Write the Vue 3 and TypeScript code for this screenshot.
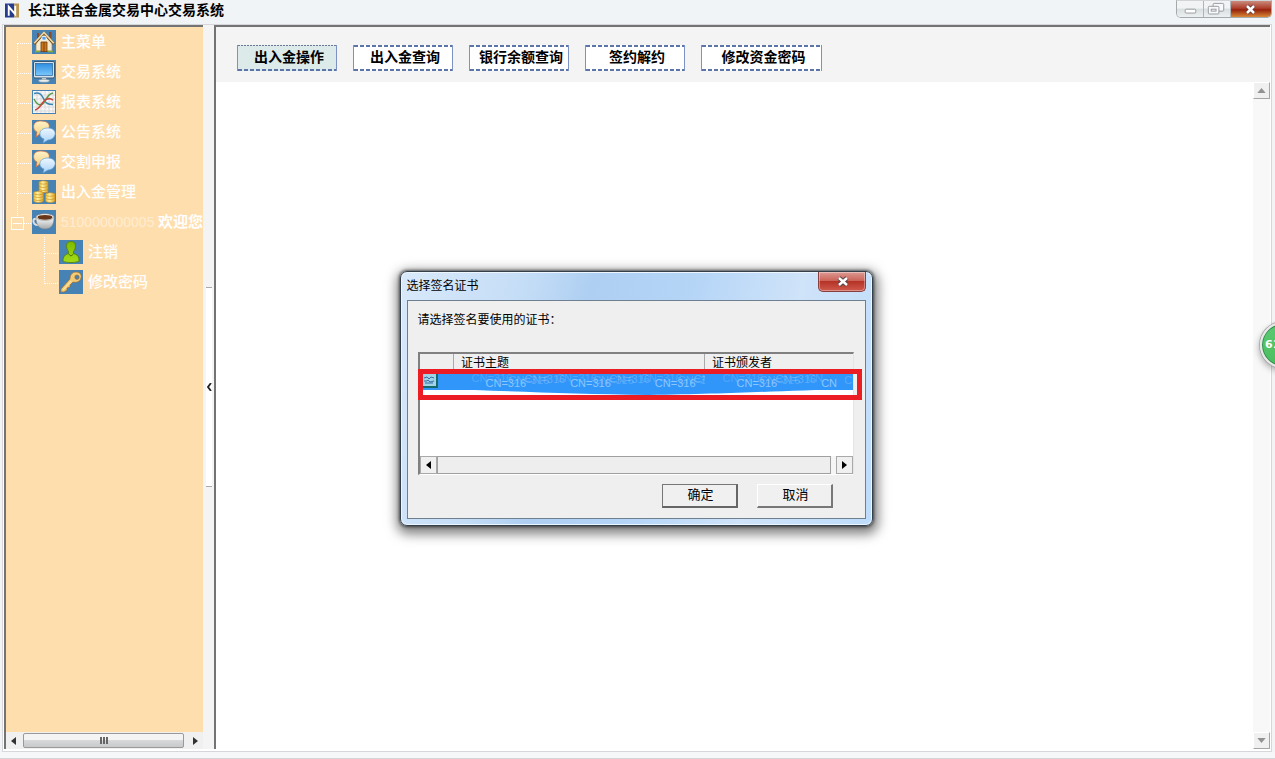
<script setup lang="ts">
import { ref } from 'vue'

interface TreeItem {
  label: string
  icon: string
}

const menu: TreeItem[] = [
  { label: '主菜单', icon: 'home' },
  { label: '交易系统', icon: 'monitor' },
  { label: '报表系统', icon: 'chart' },
  { label: '公告系统', icon: 'chat' },
  { label: '交割申报', icon: 'chat' },
  { label: '出入金管理', icon: 'coins' },
]
const children: TreeItem[] = [
  { label: '注销', icon: 'user' },
  { label: '修改密码', icon: 'key' },
]
const tabs: string[] = ['出入金操作', '出入金查询', '银行余额查询', '签约解约', '修改资金密码']
const activeTab = ref<string>('出入金操作')
</script>

<template>
  <div class="window">
    <svg class="defs" aria-hidden="true">
      <defs>
        <linearGradient id="gScreen" x1="0" y1="0" x2="0" y2="1"><stop offset="0" stop-color="#2f8de0" /><stop offset="1" stop-color="#7cc8fb" /></linearGradient>
        <linearGradient id="gWarm" x1="0" y1="0" x2="0" y2="1"><stop offset="0" stop-color="#fff2c8" /><stop offset="1" stop-color="#f8cf7c" /></linearGradient>
        <linearGradient id="gCool" x1="0" y1="0" x2="0" y2="1"><stop offset="0" stop-color="#eef7ff" /><stop offset="1" stop-color="#a9d2f8" /></linearGradient>
        <linearGradient id="gGold" x1="0" y1="0" x2="1" y2="0"><stop offset="0" stop-color="#e9b62e" /><stop offset=".4" stop-color="#fff0a0" /><stop offset="1" stop-color="#dea323" /></linearGradient>
        <linearGradient id="gCup" x1="0" y1="0" x2="0" y2="1"><stop offset="0" stop-color="#ffffff" /><stop offset="1" stop-color="#a4a8aa" /></linearGradient>
        <linearGradient id="gGreen" x1="0" y1="0" x2="0" y2="1"><stop offset="0" stop-color="#7dbb00" /><stop offset="1" stop-color="#a4dc17" /></linearGradient>
      </defs>
      <symbol id="home" viewBox="0 0 24 24">
        <path d="M5 3h2v6H5zM17 2h2.500v7H17z" fill="#8b4a2a" />
        <path d="M4 12 12 4l8 8v9H4z" fill="#f3ead0" stroke="#9b8458" stroke-width=".7" />
        <path d="M2 14 12 3 22 14" fill="none" stroke="#79501f" stroke-width="2.800" />
        <path d="M2.200 13.300 12 2.500 21.800 13.300" fill="none" stroke="#e9d9a7" stroke-width="1.700" />
        <path d="M9 12h6v9.500H9z" fill="#c9761c" stroke="#713d0b" stroke-width=".8" /><path d="M12 12v9" stroke="#82470d" />
        <path d="M10 6.500h4v3.500h-4z" fill="#4fa1ed" stroke="#fff" stroke-width=".7" />
        <path d="M3 21.500h5M16 21.500h5" stroke="#83ac3b" stroke-width="1.500" />
      </symbol>
      <symbol id="monitor" viewBox="0 0 24 24">
        <rect x="1.500" y="1.500" width="21" height="16.500" rx="1.500" fill="#d6e3eb" stroke="#38566f" />
        <rect x="3.500" y="3.500" width="17" height="12" fill="url(#gScreen)" stroke="#2462a0" stroke-width=".7" />
        <path d="M10 18h4l1 3H9z" fill="#c2cdd2" /><ellipse cx="12" cy="20.800" rx="5.500" ry="1.500" fill="#e9edee" stroke="#778b96" stroke-width=".6" />
      </symbol>
      <symbol id="chart" viewBox="0 0 24 24">
        <path d="M1 1h22v22H1z" fill="#f6f6f6" />
        <path d="M5 1v22M9 1v22M13 1v22M17 1v22M21 1v22M1 5h22M1 9h22M1 13h22M1 17h22M1 21h22" stroke="#ccc" stroke-width=".6" />
        <path d="M2 3.500c6-2 8 2 10 6s4 5 9 5" fill="none" stroke="#3884b2" stroke-width="1.600" />
        <path d="M2 9c4 8 8 7 11 2s4-7 8-8" fill="none" stroke="#5b9c4e" stroke-width="1.600" />
        <path d="M3 20c5-1 6-6 9-9s6-3 9-1" fill="none" stroke="#c8463c" stroke-width="1.600" />
      </symbol>
      <symbol id="chat" viewBox="0 0 24 24">
        <path d="M8 1c8 0 10 3 9 7-1 4-5 5-8 5l-5 4 1-5C0 10 0 1 8 1z" fill="url(#gWarm)" stroke="#d3703d" stroke-width=".7" />
        <path d="M16 8c6 0 8 4 7 7s-4 5-7 5l-5 3 1-4c-6-2-6-11 4-11z" fill="url(#gCool)" stroke="#5f9ed3" stroke-width=".7" />
      </symbol>
      <symbol id="coins" viewBox="0 0 24 24">
        <g fill="url(#gGold)" stroke="#c18a1b" stroke-width=".6">
          <path d="M7 2.500v10h9v-10z" /><ellipse cx="11.500" cy="2.500" rx="4.500" ry="1.700" /><path d="M7 6c2 2 7 2 9 0M7 9c2 2 7 2 9 0" fill="none" />
          <path d="M1.500 13v8c2 2 8 2 10 0v-8z" /><ellipse cx="6.500" cy="13" rx="5" ry="1.800" /><path d="M1.500 16c2 2 8 2 10 0m-10 3c2 2 8 2 10 0" fill="none" />
          <path d="M13.500 14.500v6.500c2 2 8 2 9.500 0v-6.500z" /><ellipse cx="18.300" cy="14.500" rx="4.800" ry="1.800" /><path d="M13.500 18c2 2 8 2 9.500 0" fill="none" />
        </g>
      </symbol>
      <symbol id="cup" viewBox="0 0 24 24">
        <path d="M5 9C0 7 0 15 6 15" fill="none" stroke="#dedede" stroke-width="2" />
        <path d="M4 7c0 8 3 12 9 12s9-4 9-12z" fill="url(#gCup)" stroke="#838383" stroke-width=".5" />
        <ellipse cx="13" cy="7" rx="9" ry="3.300" fill="#f3f3f3" stroke="#858585" stroke-width=".6" /><ellipse cx="13" cy="7.300" rx="7.500" ry="2.400" fill="#683619" />
      </symbol>
      <symbol id="user" viewBox="0 0 24 24">
        <path d="M12 1.500c6 0 5 7 2.500 10v2c4 1 5.500 3 5.500 7.500-3 2-13 2-16 0 0-4.500 2-6.500 5.500-7.500v-2C7 8.500 6 1.500 12 1.500z" fill="url(#gGreen)" stroke="#547f00" stroke-width=".8" />
        <path d="m9.500 14 2.500 2 2.500-2" fill="none" stroke="#4e7500" />
      </symbol>
      <symbol id="key" viewBox="0 0 24 24">
        <path fill-rule="evenodd" d="M17 2c4 0 6 3 5 6-1 4-5 5-8 4l-3 3v2l-3 1v2l-3 2H2v-3L11 9c0-4 2-7 6-7zm1 3a2.200 2.200 0 1 0 0 4.400A2.200 2.200 0 0 0 18 5z" fill="#f3cb77" stroke="#a46f28" stroke-width=".7" />
        <path d="m4 20 8-9" stroke="#fff2bd" />
      </symbol>
    </svg>

    <header class="titlebar">
      <svg class="logo" viewBox="0 0 15 15">
        <path d="M0 0h10v15H0z" fill="#273c8c" /><path d="M10 0h5v15h-5z" fill="#ba9653" />
        <path d="M4 13V3.500l7 8V2.500" fill="none" stroke="#fff" stroke-width="2" />
      </svg>
      <h1>长江联合金属交易中心交易系统</h1>
      <div class="winbtns">
        <button type="button" aria-label="最小化"><svg viewBox="0 0 27 16"><rect x="8.500" y="8.500" width="11" height="4" rx="1" fill="#fff" stroke="#969a9d" /></svg></button>
        <button type="button" aria-label="还原"><svg viewBox="0 0 27 16"><g fill="#f8f9fa" stroke="#969a9d"><rect x="9.500" y="2.500" width="11" height="8" rx="1" /><rect x="4.500" y="5.500" width="11" height="8" rx="1" /><rect x="7.500" y="8.500" width="5" height="2" /></g></svg></button>
        <button type="button" class="close" aria-label="关闭窗口"><svg viewBox="0 0 40 16"><path d="m16 5 7 7m0-7-7 7" stroke="#5d3430" stroke-width="4" /><path d="m16 5 7 7m0-7-7 7" stroke="#fff" stroke-width="2.500" /></svg></button>
      </div>
    </header>

    <div class="body">
      <aside class="sidebar">
        <nav class="tree">
          <ul>
            <li v-for="item in menu" :key="item.label" class="row">
              <span class="branch"></span>
              <a href="#"><svg class="icon"><use :href="'#' + item.icon" /></svg>{{ item.label }}</a>
            </li>
            <li>
              <div class="row last">
                <span class="branch"></span>
                <button type="button" class="toggle" aria-label="折叠"></button>
                <a href="#"><svg class="icon"><use href="#cup" /></svg><span class="masked">510000000005</span><b>欢迎您</b></a>
              </div>
              <ul class="sub">
                <li v-for="item in children" :key="item.label" class="row">
                  <span class="branch"></span>
                  <a href="#"><svg class="icon"><use :href="'#' + item.icon" /></svg>{{ item.label }}</a>
                </li>
              </ul>
            </li>
          </ul>
        </nav>
        <div class="hscroll">
          <button type="button" aria-label="向左"><svg viewBox="0 0 5 8"><path d="M5 0v8L0 4z" fill="#333" /></svg></button>
          <div class="thumb"><i></i><i></i><i></i></div>
          <button type="button" aria-label="向右"><svg viewBox="0 0 5 8"><path d="M0 0v8l5-4z" fill="#333" /></svg></button>
        </div>
      </aside>

      <div class="splitter">
        <button type="button" aria-label="收起侧栏"><svg viewBox="0 0 5 8"><path d="M4 0 1 4l3 4" fill="none" stroke="#222" stroke-width="1.800" /></svg></button>
      </div>

      <main class="content">
        <div class="toolbar">
          <button v-for="tab in tabs" :key="tab" type="button" :class="{ active: tab === activeTab, wide: tab === '修改资金密码' }" @click="activeTab = tab">{{ tab }}</button>
        </div>
        <div class="view">
          <div class="vscroll">
            <button type="button" aria-label="向上"><svg viewBox="0 0 10 6"><path d="M0 6h10L5 0z" fill="#929292" /></svg></button>
            <button type="button" aria-label="向下"><svg viewBox="0 0 10 6"><path d="M0 0h10L5 6z" fill="#929292" /></svg></button>
          </div>
        </div>
      </main>
    </div>
    <footer class="status"></footer>

    <div class="badge">61</div>

    <section class="dialog" role="dialog" aria-labelledby="dlg-title">
      <header>
        <h2 id="dlg-title">选择签名证书</h2>
        <button type="button" aria-label="关闭"><svg viewBox="0 0 46 18"><path d="m20 6 8 7m0-7-8 7" stroke="#584448" stroke-width="4.500" /><path d="m20 6 8 7m0-7-8 7" stroke="#fff" stroke-width="2.500" /></svg></button>
      </header>
      <div class="panel">
        <p>请选择签名要使用的证书：</p>
        <div class="list">
          <table>
            <colgroup><col class="c1" /><col class="c2" /><col /></colgroup>
            <thead><tr><th></th><th>证书主题</th><th>证书颁发者</th></tr></thead>
            <tbody>
              <tr>
                <td><svg class="cert" viewBox="0 0 16 14"><path d="M0 0h16v14H0z" fill="#17686b" /><path d="M0 0h14v12H0z" fill="#9fd5e4" /><path d="M2 4l3-1 2 2 2-2 3 1M2 7h3l1-1 2 2 4-1M3 9h8" fill="none" stroke="#336daa" /></svg></td>
                <td><div class="smear"><span>CN=316</span><span>CN=316</span><span>CN=316</span></div></td>
                <td><div class="smear"><span>CN=316</span><span>CN</span></div></td>
              </tr>
            </tbody>
          </table>
          <svg class="swoosh" viewBox="0 0 414 6" preserveAspectRatio="none"><path d="M0 0h414C330 2 290 5 210 6 130 5 70 2 0 0z" fill="#3096fa" /></svg>
          <div class="mark"></div>
          <div class="listscroll">
            <button type="button" aria-label="列表向左"><svg viewBox="0 0 5 8"><path d="M5 0v8L0 4z" fill="#000" /></svg></button>
            <div class="bar"></div>
            <button type="button" aria-label="列表向右"><svg viewBox="0 0 5 8"><path d="M0 0v8l5-4z" fill="#000" /></svg></button>
          </div>
        </div>
        <div class="actions">
          <button type="button" class="default">确定</button>
          <button type="button">取消</button>
        </div>
      </div>
    </section>
  </div>
</template>

<style>
body {
  margin: 0;
}
</style>

<style scoped>
* {
  box-sizing: border-box;
}
.window {
  position: relative;
  display: flex;
  flex-direction: column;
  height: 100vh;
  overflow: hidden;
  background: #f2f4f6;
  font-family: "Liberation Sans", "Noto Sans CJK SC", sans-serif;
  color: #000;
}
.defs {
  position: absolute;
  width: 0;
  height: 0;
}
button {
  padding: 0;
  font-family: inherit;
}
button svg {
  display: block;
}
h1, h2, p, ul {
  margin: 0;
  padding: 0;
}
ul {
  list-style: none;
}

.titlebar {
  display: flex;
  align-items: center;
  flex: none;
  height: 24px;
  padding: 0 3px 3px 5px;
  background: #f0f4f6;
}
.logo {
  width: 14px;
  height: 15px;
}
h1 {
  flex: 1;
  margin-left: 9px;
  padding-bottom: 2px;
  font-size: 14px;
  line-height: 18px;
}
.winbtns {
  display: flex;
  align-self: flex-start;
  height: 18px;
  border: 1px solid #a5a9ac;
  border-top-color: #d0d4d6;
  border-radius: 0 0 5px 5px;
  overflow: hidden;
}
.winbtns button {
  width: 27px;
  border: 0;
  border-right: 1px solid #b0b4b6;
  background: linear-gradient(#f1f3f4 45%, #d9dee0 50%, #edf0f1);
}
.winbtns .close {
  width: 40px;
  border-right: 0;
  background: linear-gradient(#c98b7c, #ad3e2b 45%, #95230d 55%, #d98736);
}

.body {
  flex: 1;
  display: flex;
  min-height: 0;
  margin: 0 3px 0 2px;
  padding: 0 1px 2px 1px;
  border: 1px solid #d6d7da;
  background: #fff;
}
.sidebar {
  display: flex;
  flex-direction: column;
  flex: none;
  width: 199px;
  border: 2px solid #737373;
  border-right: 0;
  border-bottom: 0;
  background: #ffdead;
}
.tree {
  flex: 1;
  overflow: hidden;
  font-size: 15px;
  line-height: 20px;
  color: #fff;
}
.row {
  position: relative;
  display: flex;
  align-items: center;
  height: 30px;
  padding-left: 26px;
}
.row a {
  display: flex;
  align-items: center;
  font-weight: 500;
  white-space: nowrap;
  text-decoration: none;
  color: #fff;
}
.icon {
  flex: none;
  width: 24px;
  height: 24px;
  margin-right: 5px;
  background: #4682b4;
}
.branch {
  position: absolute;
  left: 11px;
  top: 0;
  width: 14px;
  height: 17px;
  border-left: 1px dotted #fff;
  border-bottom: 1px dotted #fff;
}
.row:not(.last)::before {
  content: "";
  position: absolute;
  left: 11px;
  top: 16px;
  height: 14px;
  border-left: 1px dotted #fff;
}
.row:first-child > .branch {
  border-left-color: transparent;
}
.last:first-child > .branch {
  border-left-color: #fff;
}
.sub .row {
  padding-left: 53px;
}
.sub .branch,
.sub .row:not(.last)::before {
  left: 38px;
}
.sub .row:first-child > .branch {
  border-left-color: #fff;
}
.sub .row:last-child::before {
  display: none;
}
.toggle {
  position: absolute;
  left: 5px;
  top: 10px;
  width: 13px;
  height: 13px;
  border: 1px solid #fff;
  background: linear-gradient(#fff, #fff) center / 9px 1px no-repeat #ffdead;
}
.masked {
  width: 97px;
  font-size: 14px;
  font-weight: 400;
  color: rgba(255, 255, 255, 0.45);
}
.hscroll {
  display: flex;
  flex: none;
  height: 17px;
  background: #f0f0f0;
}
.hscroll button {
  display: grid;
  place-items: center;
  width: 15px;
  border: 0;
  background: none;
}
.hscroll svg,
.splitter svg {
  width: 5px;
  height: 8px;
}
.thumb {
  flex: 1;
  display: flex;
  align-items: center;
  justify-content: center;
  gap: 1px;
  margin: 1px 4px 1px 2px;
  border: 1px solid #999;
  border-radius: 2px;
  background: linear-gradient(#f4f4f4 45%, #d7d8d9 50%, #c8c9ca);
}
.thumb i {
  width: 2px;
  height: 7px;
  background: #666;
}
.splitter {
  display: flex;
  align-items: center;
  flex: none;
  width: 11px;
  padding: 0 2px 0 3px;
  background: #f4f4f4;
}
.splitter button {
  display: grid;
  place-items: center;
  width: 6px;
  height: 200px;
  border: 1px solid #aaa;
  border-width: 1px 0;
  background: #fff;
}

.content {
  flex: 1;
  display: flex;
  flex-direction: column;
  min-width: 0;
  border: 2px solid #737373;
  border-right: 0;
  border-bottom: 0;
}
.toolbar {
  display: flex;
  flex: none;
  gap: 16px;
  height: 55px;
  padding: 18px 21px 11px;
  background: #f4f4f4;
}
.toolbar button {
  width: 100px;
  padding: 0 0 2px 4px;
  border: 1px solid #7c92c0;
  border-width: 0 1px;
  background:
    repeating-linear-gradient(90deg, #5b75aa 0 4px, transparent 4px 6px) top / 100% 2px no-repeat,
    repeating-linear-gradient(90deg, #5b75aa 0 4px, transparent 4px 6px) bottom / 100% 2px no-repeat,
    #fff;
  font-size: 14px;
  font-weight: 700;
  line-height: 20px;
  white-space: nowrap;
  color: #000;
}
.toolbar .active {
  background:
    repeating-linear-gradient(90deg, #6a7896 0 2px, transparent 2px 3px) top / 100% 1px no-repeat,
    repeating-linear-gradient(90deg, #5b75aa 0 4px, transparent 4px 6px) bottom / 100% 2px no-repeat,
    #dcebea;
}
.toolbar .wide {
  width: 121px;
}
.view {
  flex: 1;
  display: flex;
  justify-content: flex-end;
  background: #fff;
}
.vscroll {
  display: flex;
  flex-direction: column;
  justify-content: space-between;
  width: 17px;
  background: #f8f8f8;
}
.vscroll button {
  display: grid;
  place-items: center;
  height: 17px;
  border: 1px solid #fff;
  border-right-color: #a5a5a5;
  border-bottom-color: #a5a5a5;
  background: #f0f0f0;
}
.vscroll svg {
  width: 9px;
  height: 5px;
}
.status {
  flex: none;
  height: 7px;
  border-bottom: 1px solid #d3d4d6;
  background: #f6f7f9;
}

.badge {
  position: absolute;
  right: -31px;
  top: 322px;
  width: 46px;
  height: 46px;
  padding-left: 3px;
  border: 2px solid #e8e8e8;
  border-radius: 50%;
  background: linear-gradient(#5cc873, #49bf5c);
  box-shadow: inset 0 0 0 1px #328c50, 0 0 0 1px #aaa, -1px 3px 6px rgba(0, 0, 0, 0.3);
  font: 700 11px/42px "DejaVu Sans", sans-serif;
  color: #fff;
}

.dialog {
  position: absolute;
  left: calc(50% - 238px);
  top: calc(50% - 109px);
  width: 473px;
  padding: 0 6px 6px;
  border: 1px solid #33404c;
  border-radius: 7px;
  background: linear-gradient(105deg, #d9e9fa 0, #c3dcf6 25%, #aecff2 36%, #b5d5f7 55%, #cfe3f9 75%, #bddcfb);
  box-shadow: inset 0 0 0 1px #edf6ff, 0 0 3px 1px rgba(0, 0, 0, 0.55), 1px 4px 12px 4px rgba(0, 0, 0, 0.5);
  font-size: 12px;
}
.dialog header {
  display: flex;
  justify-content: space-between;
  height: 28px;
}
h2 {
  font-size: 12px;
  font-weight: 400;
  line-height: 29px;
}
.dialog header button {
  width: 48px;
  height: 20px;
  border: 1px solid #873f3f;
  border-top: 0;
  border-radius: 0 0 5px 5px;
  box-shadow: inset 0 0 0 1px rgba(255, 255, 255, 0.35);
  background: linear-gradient(#dc9b93, #cc6459 45%, #b53327 50%, #cf5a4c);
}
.panel {
  padding: 10px;
  border: 1px solid #6e7f90;
  background: #efefef;
}
.panel p {
  line-height: 18px;
}
.list {
  position: relative;
  display: flex;
  flex-direction: column;
  height: 123px;
  margin: 23px 1px 0 0;
  border: 2px solid #808080;
  border-right: 1px solid #e5e5e5;
  border-bottom: 1px solid #fff;
  background: #fff;
}
table {
  width: 100%;
  table-layout: fixed;
  border-collapse: collapse;
}
.c1 {
  width: 34px;
}
.c2 {
  width: 251px;
}
th {
  height: 19px;
  padding: 1px 0 0 7px;
  border-left: 1px solid #aaa;
  background: #efefef;
  font-weight: 400;
  line-height: 17px;
  text-align: left;
}
th:first-child {
  border-left: 0;
}
td {
  height: 17px;
  padding: 0;
  background: #3096fa;
}
.cert {
  display: block;
  width: 16px;
  height: 14px;
  margin-left: 2px;
}
.smear {
  display: flex;
  gap: 44px;
  height: 17px;
  padding-left: 32px;
  overflow: hidden;
  font-size: 11px;
  line-height: 20px;
  white-space: nowrap;
  color: #8cc6ff;
  text-shadow: 23px -3px rgba(190, 220, 255, 0.3), 39px -4px rgba(190, 220, 255, 0.35), -14px -5px rgba(190, 220, 255, 0.25);
}
.swoosh {
  position: absolute;
  left: 19px;
  top: 35px;
  width: calc(100% - 19px);
  height: 6px;
}
.mark {
  position: absolute;
  left: -2px;
  right: -9px;
  top: 15px;
  height: 31px;
  border: 5px solid #ec1c24;
}
.listscroll {
  display: flex;
  height: 18px;
  margin-top: auto;
  background: #f5f5f5;
}
.listscroll button {
  display: grid;
  place-items: center;
  width: 17px;
  border: 1px solid #a9a9a9;
  background: #f0f0f0;
}
.listscroll svg {
  width: 5px;
  height: 8px;
}
.bar {
  flex: 1;
  margin-right: 5px;
  border: 1px solid #a0a0a0;
  background: #eee;
}
.actions {
  display: flex;
  justify-content: flex-end;
  gap: 19px;
  margin-top: 9px;
  padding-right: 22px;
}
.actions button {
  width: 76px;
  height: 24px;
  padding-left: 3px;
  border: 1px solid #fff;
  border-right: 2px solid #777;
  border-bottom: 2px solid #777;
  background: #f0f0f0;
  font-size: 13px;
  line-height: 18px;
  color: #000;
}
.actions .default {
  border-color: #777 #666 #666 #777;
}
</style>
